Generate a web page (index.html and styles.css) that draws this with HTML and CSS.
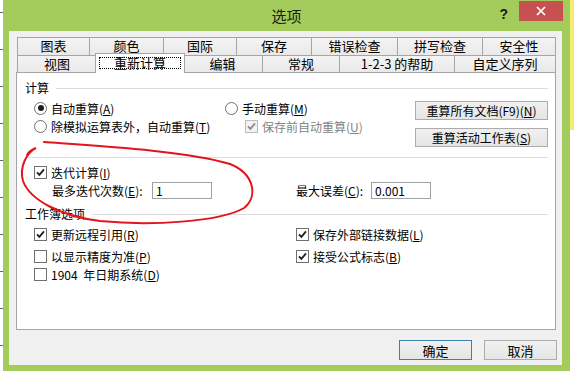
FILE: index.html
```html
<!DOCTYPE html>
<html lang="zh-CN">
  <head>
    <meta charset="UTF-8" />
    <title>选项</title>
    <link rel="stylesheet" href="styles.css">
  </head>
  <body>
    <div class="window">
      <div class="titlebar">
        <span></span>
        <span class="title">选项</span>
        <div class="caption">
          <span class="help">?</span>
          <span class="close">
            <svg width="10" height="10" viewBox="0 0 10 10"><path d="M1 1L9 9M9 1L1 9" stroke="#fff" stroke-width="1.7" fill="none"/></svg>
          </span>
        </div>
      </div>

      <div class="client">
        <div class="tabs">
          <div class="tab-row back">
            <div class="tab">图表</div>
            <div class="tab">颜色</div>
            <div class="tab">国际</div>
            <div class="tab">保存</div>
            <div class="tab">错误检查</div>
            <div class="tab">拼写检查</div>
            <div class="tab">安全性</div>
          </div>
          <div class="tab-row front">
            <div class="tab">视图</div>
            <div class="tab active"><span class="focus">重新计算</span></div>
            <div class="tab">编辑</div>
            <div class="tab">常规</div>
            <div class="tab">1-2-3 的帮助</div>
            <div class="tab">自定义序列</div>
          </div>
        </div>

        <div class="panel">
          <div class="group-title">计算</div>
          <div class="calc">
            <div class="opts">
              <div class="opt"><span class="radio on"></span><span>自动重算(<u>A</u>)</span></div>
              <div class="opt"><span class="radio"></span><span>除模拟运算表外，自动重算(<u>T</u>)</span></div>
            </div>
            <div class="opts">
              <div class="opt"><span class="radio"></span><span>手动重算(<u>M</u>)</span></div>
              <div class="opt sub disabled">
                <span class="box"><svg width="9" height="9" viewBox="0 0 9 9"><path d="M1 4.3L3.4 6.8L8 1.4" fill="none" stroke-width="1.8"/></svg></span>
                <span>保存前自动重算(<u>U</u>)</span>
              </div>
            </div>
            <div class="calc-btns">
              <button class="btn">重算所有文档(F9)(<u>N</u>)</button>
              <button class="btn">重算活动工作表(<u>S</u>)</button>
            </div>
          </div>

          <div class="sep"></div>

          <div class="iter">
            <div class="opt">
              <span class="box"><svg width="9" height="9" viewBox="0 0 9 9"><path d="M1 4.3L3.4 6.8L8 1.4" fill="none" stroke-width="1.8"/></svg></span>
              <span>迭代计算(<u>I</u>)</span>
            </div>
            <div class="iter-fields">
              <div class="field indent">
                <label class="lbl-long">最多迭代次数(<u>E</u>):</label>
                <input class="num" type="text" value="1" />
              </div>
              <div class="field">
                <label class="lbl-short">最大误差(<u>C</u>):</label>
                <input class="num" type="text" value="0.001" />
              </div>
            </div>
          </div>

          <div class="group-title">工作簿选项</div>
          <div class="book">
            <div class="opt">
              <span class="box"><svg width="9" height="9" viewBox="0 0 9 9"><path d="M1 4.3L3.4 6.8L8 1.4" fill="none" stroke-width="1.8"/></svg></span>
              <span>更新远程引用(<u>R</u>)</span>
            </div>
            <div class="opt">
              <span class="box"><svg width="9" height="9" viewBox="0 0 9 9"><path d="M1 4.3L3.4 6.8L8 1.4" fill="none" stroke-width="1.8"/></svg></span>
              <span>保存外部链接数据(<u>L</u>)</span>
            </div>
            <div class="opt"><span class="box"></span><span>以显示精度为准(<u>P</u>)</span></div>
            <div class="opt">
              <span class="box"><svg width="9" height="9" viewBox="0 0 9 9"><path d="M1 4.3L3.4 6.8L8 1.4" fill="none" stroke-width="1.8"/></svg></span>
              <span>接受公式标志(<u>B</u>)</span>
            </div>
            <div class="opt"><span class="box"></span><span class="wide">1904 年日期系统(<u>D</u>)</span></div>
          </div>
        </div>

        <div class="footer">
          <button class="btn default">确定</button>
          <button class="btn">取消</button>
        </div>
      </div>
    </div>

    <!-- hand drawn red circle -->
    <svg class="mark" width="574" height="371" viewBox="0 0 574 371">
      <path d="M44 142 C100 146 188 151 230 164 C255 174 258 197 244 208 C220 222 150 226 100 221 C60 216 30 200 23 181 C19 166 27 153 36 148 C31 150 28 153 27 155" fill="none" stroke="#e3141c" stroke-width="2" stroke-linecap="round"/>
    </svg>
  </body>
</html>
```

FILE: styles.css
```css
* {
  box-sizing: border-box;
}
body {
  margin: 0;
  width: 574px;
  height: 371px;
  overflow: hidden;
  position: relative;
  font-family: "Noto Sans CJK SC", sans-serif;
  font-size: 12px;
  color: #000;
  text-autospace: no-autospace;
  background:
    repeating-linear-gradient(to bottom, transparent 0 12px, #666 12px 13px, transparent 13px 37px) left top / 3px 100% no-repeat,
    linear-gradient(#f2ee6c, #f2ee6c) right top / 4px 130px no-repeat,
    #fff;
}

.window {
  margin-left: 3px;
  width: 567px;
  height: 371px;
  background: #a3cc5c;
  padding: 0 8px 6px 6px;
  display: flex;
  flex-direction: column;
}

.titlebar {
  height: 31px;
  display: grid;
  grid-template-columns: 1fr auto 1fr;
}
.title {
  font-size: 15px;
  line-height: 31px;
  color: #1a1a1a;
  padding-left: 2px;
}
.caption {
  display: flex;
  justify-content: flex-end;
  align-items: flex-start;
}
.help {
  font-family: "Liberation Sans", sans-serif;
  font-weight: bold;
  font-size: 14px;
  line-height: 14px;
  margin-top: 7px;
  margin-right: 11px;
  color: #1a1a1a;
}
.close {
  width: 44px;
  height: 20px;
  margin-top: 1px;
  margin-right: -1px;
  background: #c75050;
  display: flex;
  align-items: center;
  justify-content: center;
}

.client {
  flex: 1;
  background: #f0f0f0;
  padding: 6px 6px 5px 7px;
  display: flex;
  flex-direction: column;
}

/* tabs */
.tabs {
  margin-left: 1px;
}
.tab-row {
  display: grid;
}
.back {
  height: 18px;
  grid-template-columns: 73px 74px 73px 75px 86px 85px 73px;
}
.front {
  height: 17px;
  grid-template-columns: 80px 86px 80px 77px 115px 101px;
}
.tab {
  border: 1px solid #a5a5a5;
  border-left: none;
  border-bottom: none;
  background: linear-gradient(#f4f4f4, #e9e9e9);
  text-align: center;
  font-size: 13px;
  line-height: 16px;
  white-space: nowrap;
}
.tab:first-child {
  border-left: 1px solid #a5a5a5;
}
.tab.active {
  margin: -2px -2px -1px;
  border-left: 1px solid #a5a5a5;
  background: #fff;
  position: relative;
  z-index: 1;
  display: flex;
  overflow: hidden;
}
.focus {
  flex: 1;
  margin: 3px 3px 0;
  height: 12px;
  border: 1px dotted #000;
  line-height: 10px;
}

/* panel */
.panel {
  height: 258px;
  border: 1px solid #a5a5a5;
  background: #fff;
  padding: 0 7px 0 8px;
}
.group-title {
  display: flex;
  align-items: center;
  gap: 7px;
  height: 16px;
  line-height: 16px;
  margin-top: 7px;
}
.group-title::after {
  content: "";
  flex: 1;
  height: 1px;
  background: #dcdcdc;
}

.calc {
  display: grid;
  grid-template-columns: 191px 190px 133px;
  margin-top: 3px;
  padding-left: 9px;
}
.opt {
  display: flex;
  align-items: center;
  gap: 4px;
  height: 18px;
  white-space: nowrap;
}
.opt.sub {
  padding-left: 20px;
}
.opt.disabled {
  color: #838383;
}
.wide {
  word-spacing: 3px;
}
.calc-btns {
  display: flex;
  flex-direction: column;
  gap: 8px;
  padding-top: 2px;
}

.radio,
.box {
  flex: none;
  width: 13px;
  height: 13px;
  border: 1px solid #707070;
  background: #fff;
  display: flex;
  align-items: center;
  justify-content: center;
}
.radio {
  border-radius: 50%;
}
.radio.on::after {
  content: "";
  width: 6px;
  height: 6px;
  border-radius: 50%;
  background: #1e1e1e;
}
.box svg {
  stroke: #1e1e1e;
}
.disabled .box {
  border-color: #bcbcbc;
  background: #f2f2f2;
}
.disabled .box svg {
  stroke: #8d8d8d;
}

.sep {
  height: 1px;
  background: #dcdcdc;
  margin-top: 10px;
}

.iter {
  padding-left: 9px;
  margin-top: 5px;
}
.iter-fields {
  display: grid;
  grid-template-columns: 262px auto;
  height: 17px;
  margin-top: 1px;
}
.field {
  display: flex;
  align-items: center;
  white-space: nowrap;
}
.field.indent {
  padding-left: 18px;
}
.lbl-long {
  width: 100px;
}
.lbl-short {
  width: 75px;
}
.num {
  width: 60px;
  height: 17px;
  border: 1px solid #a0a0a0;
  padding: 0 3px;
  font: inherit;
  line-height: 15px;
  color: #000;
  outline: 0;
}

.book {
  display: grid;
  grid-template-columns: 262px auto;
  grid-template-rows: 22px 18px 18px;
  margin-top: 3px;
  padding-left: 9px;
}

/* buttons */
.btn {
  height: 19px;
  padding: 0;
  border: 1px solid #acacac;
  background: linear-gradient(#f0f0f0, #e5e5e5);
  font: inherit;
  line-height: 17px;
  color: #000;
}
.footer {
  display: flex;
  justify-content: flex-end;
  gap: 12px;
  margin-top: 10px;
  margin-right: -1px;
}
.footer .btn {
  width: 73px;
  height: 20px;
  font-size: 13px;
}
.btn.default {
  border-color: #3c7fb1;
}

.mark {
  position: absolute;
  left: 0;
  top: 0;
  pointer-events: none;
}
```
